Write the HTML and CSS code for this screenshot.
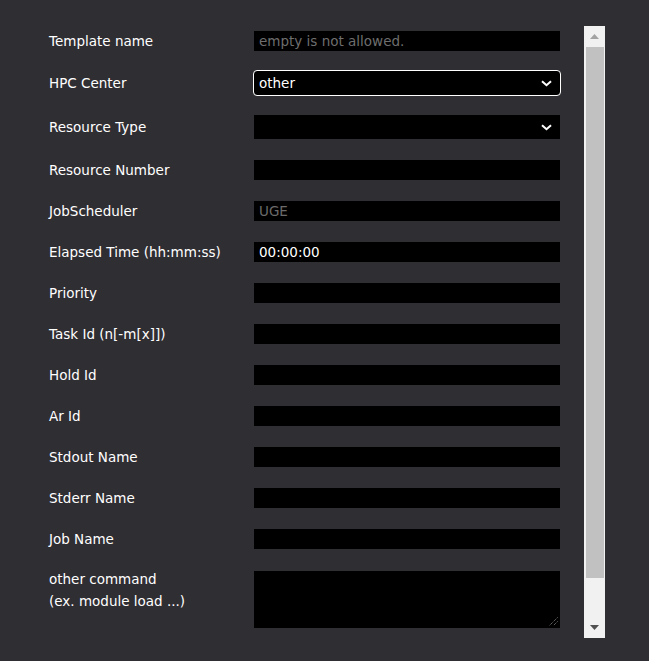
FILE: index.html
```html
<!DOCTYPE html>
<html lang="en">
<head>
<meta charset="utf-8">
<title>Template</title>
<link rel="stylesheet" href="styles.css">
</head>
<body>
<div class="panel">
  <div class="content">
    <div class="form">
      <div class="row tight"><label class="label">Template name</label><input class="field" type="text" placeholder="empty is not allowed."></div>
      <div class="row tight"><label class="label">HPC Center</label>
        <div class="select focused"><span class="select-text">other</span>
          <svg class="chev" width="11" height="7" viewBox="0 0 11 7"><path d="M1 1.2 L5.5 5.2 L10 1.2" fill="none" stroke="#fff" stroke-width="2"/></svg>
        </div>
      </div>
      <div class="row"><label class="label">Resource Type</label>
        <div class="select"><span class="select-text"></span>
          <svg class="chev" width="11" height="7" viewBox="0 0 11 7"><path d="M1 1.2 L5.5 5.2 L10 1.2" fill="none" stroke="#fff" stroke-width="2"/></svg>
        </div>
      </div>
      <div class="row"><label class="label">Resource Number</label><input class="field" type="text"></div>
      <div class="row"><label class="label">JobScheduler</label><input class="field disabled" type="text" value="UGE" disabled></div>
      <div class="row"><label class="label">Elapsed Time (hh:mm:ss)</label><input class="field" type="text" value="00:00:00"></div>
      <div class="row"><label class="label">Priority</label><input class="field" type="text"></div>
      <div class="row"><label class="label">Task Id (n[-m[x]])</label><input class="field" type="text"></div>
      <div class="row"><label class="label">Hold Id</label><input class="field" type="text"></div>
      <div class="row"><label class="label">Ar Id</label><input class="field" type="text"></div>
      <div class="row"><label class="label">Stdout Name</label><input class="field" type="text"></div>
      <div class="row"><label class="label">Stderr Name</label><input class="field" type="text"></div>
      <div class="row"><label class="label">Job Name</label><input class="field" type="text"></div>
      <div class="row top"><label class="label multi">other command<br>(ex. module load ...)</label>
        <div class="area-wrap">
          <textarea class="area"></textarea>
          <svg class="resizer" width="9" height="9" viewBox="0 0 9 9"><path d="M8.5 0.5 L0.5 8.5 M8.5 4.5 L4.5 8.5" stroke="#8a8a8a" stroke-width="1" stroke-dasharray="1 1" fill="none"/></svg>
        </div>
      </div>
    </div>
  </div>
  <div class="scrollbar">
    <div class="sb-btn"><svg width="9" height="5" viewBox="0 0 9 5"><path d="M4.5 0 L9 5 L0 5 Z" fill="#a3a3a3"/></svg></div>
    <div class="sb-track"><div class="sb-thumb"></div></div>
    <div class="sb-btn"><svg width="9" height="5" viewBox="0 0 9 5"><path d="M0 0 L9 0 L4.5 5 Z" fill="#505050"/></svg></div>
  </div>
</div>
</body>
</html>
```
FILE: styles.css
```css
html, body {
  margin: 0;
  padding: 0;
  background: #2f2e33;
}
body {
  font-family: "DejaVu Sans", Verdana, sans-serif;
  font-size: 13.5px;
  color: #ffffff;
}
.panel {
  display: flex;
  margin: 26px 44px 0 26px;
  height: 612px;
}
.content {
  flex: 1;
  overflow: hidden;
  padding: 5px 24px 0 23px;
}
.form {
  display: flex;
  flex-direction: column;
  gap: 21px;
}
.row {
  display: flex;
  align-items: center;
}
.row.tight {
  margin-bottom: -1px;
}
.row.top {
  align-items: flex-start;
  margin-top: -2px;
}
.label {
  width: 205px;
  flex: none;
  line-height: 20px;
  color: #ffffff;
}
.label.multi {
  line-height: 22px;
}
.field {
  box-sizing: border-box;
  width: 306px;
  height: 20px;
  margin: 0;
  border: none;
  background: #000;
  color: #fff;
  font-family: inherit;
  font-size: 13.5px;
  padding: 0 5px;
  outline: none;
}
.field::placeholder {
  color: #6e6e6e;
}
.field.disabled {
  color: #6b6b6b;
}
.select {
  box-sizing: border-box;
  width: 306px;
  height: 24px;
  background: #000;
  display: flex;
  align-items: center;
  justify-content: space-between;
  padding: 0 8px 0 5px;
}
.select.focused {
  outline: 1px solid #ffffff;
  border-radius: 3px;
}
.select-text {
  color: #fff;
}
.chev {
  display: block;
}
.area-wrap {
  position: relative;
  width: 306px;
  height: 57px;
  margin-top: 3px;
}
.area {
  display: block;
  box-sizing: border-box;
  width: 306px;
  height: 57px;
  margin: 0;
  border: none;
  background: #000;
  color: #fff;
  padding: 2px 5px;
  outline: none;
  font-family: inherit;
  resize: none;
}
.resizer {
  position: absolute;
  right: 2px;
  bottom: 2px;
}
.scrollbar {
  width: 21px;
  flex: none;
  background: #f1f1f1;
  display: flex;
  flex-direction: column;
}
.sb-btn {
  height: 21px;
  display: flex;
  align-items: center;
  justify-content: center;
}
.sb-track {
  flex: 1;
  padding: 0 1px 0 2px;
}
.sb-thumb {
  height: 531px;
  background: #c1c1c1;
}
```
